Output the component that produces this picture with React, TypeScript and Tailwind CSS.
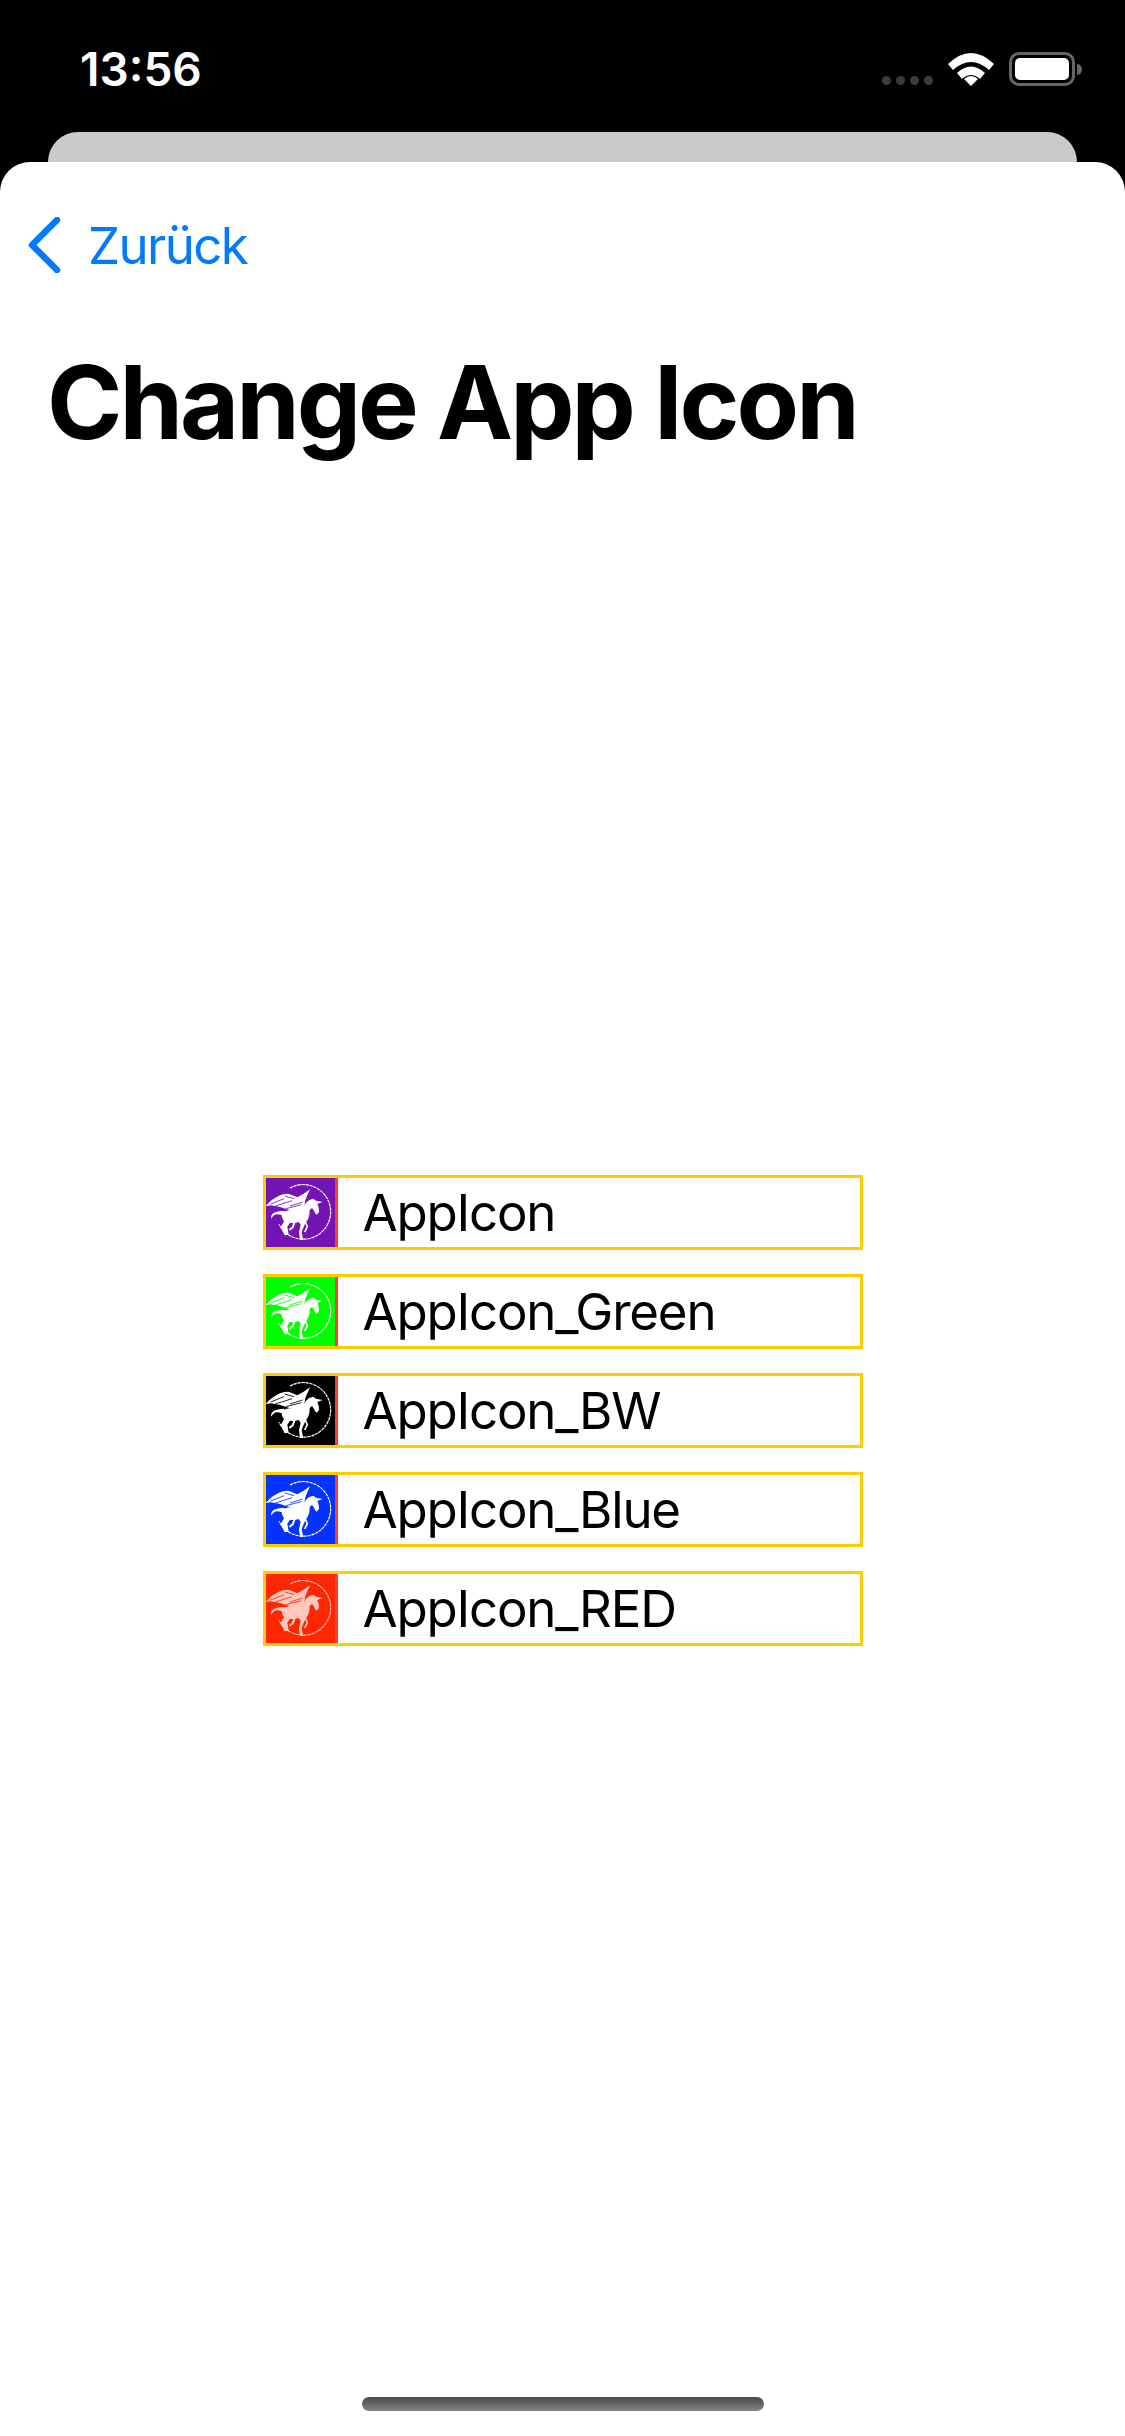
const ROWS = [
  { name: "AppIcon", bg: "bg-[#7514b4]", ink: "text-[#7514b4]" },
  { name: "AppIcon_Green", bg: "bg-[#00ff00]", ink: "text-[#00ff00]" },
  { name: "AppIcon_BW", bg: "bg-black", ink: "text-black" },
  { name: "AppIcon_Blue", bg: "bg-[#0433ff]", ink: "text-[#0433ff]" },
  { name: "AppIcon_RED", bg: "bg-[#ff2600]", ink: "text-[#ff2600]" },
];

// 3 units to a pixel of the 69px icon
function Pegasus({ soft }: { soft?: boolean }) {
  return (
    <svg viewBox="6 6 207 207" className={`w-full h-full ${soft ? "opacity-75" : ""}`}>
      <path d="M78 36 A82 82 0 1 1 45 145" fill="none" stroke="white" strokeWidth="3.5" strokeDasharray="10 2" />
      {/* wing */}
      <path d="M5 90 Q22 70 48 58 Q62 52 76 54 L100 64 Q120 54 138 40 Q130 58 124 72 L120 96 L108 106 L76 102 L46 92 L20 88 Z" fill="white" />
      <path d="M20 84 L60 68 M34 90 L84 74 M66 98 L112 86 M78 90 L116 78 M62 60 L90 68" stroke="currentColor" strokeWidth="2.5" fill="none" />
      {/* tail */}
      <path d="M21 128 Q20 116 30 110 Q44 104 60 104 L54 118 Q40 112 32 116 Q26 120 21 128 Z" fill="white" />
      {/* body, legs, neck, head, horn */}
      <path d="M54 108 Q80 100 108 102 Q120 92 126 80 Q134 70 148 68 L156 74 L176 78 L160 84 Q166 96 165 108 L158 116 Q152 112 150 104 L144 96 L137 102 Q138 122 128 136 L122 146 L116 160 L113 170 L118 192 L108 192 L105 168 L110 146 L104 138 Q90 142 78 140 L70 152 L74 176 L62 178 L56 166 L50 154 L60 136 Q50 122 54 108 Z" fill="white" />
      <path d="M92 138 L86 154 L76 162" stroke="white" strokeWidth="6" fill="none" />
      <path d="M124 138 L130 152 L122 168" stroke="white" strokeWidth="5" fill="none" />
    </svg>
  );
}

function Row({ name, bg, ink }: { name: string; bg: string; ink: string }) {
  return (
    <div className="flex items-center w-[600px] h-[75px] border-[3px] border-[#ffcc00]">
      <div className={`w-[72px] h-[69px] shrink-0 border-r-[3px] border-[#ff3b30] ${bg} ${ink}`}>
        <Pegasus soft={name === "AppIcon_RED"} />
      </div>
      <span className="ml-[25px] text-[51px] leading-none tracking-[-1.2px] text-black">{name}</span>
    </div>
  );
}

export default function App() {
  return (
    <div className="w-[1125px] h-[2436px] bg-black flex flex-col overflow-hidden font-['Inter',sans-serif]">
      <div className="h-[132px] shrink-0 flex items-start justify-between pl-[80px] pr-[43px] pt-[42px]">
        <span className="text-[46px] leading-[54px] font-semibold text-white">13:56</span>
        <div className="flex items-end gap-[15px] pt-[10px]">
          <div className="flex gap-[5px] mb-[1px]">
            <div className="w-[9px] h-[9px] rounded-full bg-[#3c3c3c]" />
            <div className="w-[9px] h-[9px] rounded-full bg-[#3c3c3c]" />
            <div className="w-[9px] h-[9px] rounded-full bg-[#3c3c3c]" />
            <div className="w-[9px] h-[9px] rounded-full bg-[#3c3c3c]" />
          </div>
          <svg width="46" height="33" viewBox="0 0 46 33">
            <path d="M0 11 Q23 -11 46 11 L41 17 Q23 1 5 17 Z" fill="white" />
            <path d="M9 20 Q23 7 37 20 L32 26 Q23 18 14 26 Z" fill="white" />
            <path d="M16 26 Q23 20 30 26 L23 33 Z" fill="white" />
          </svg>
          <div className="flex items-center">
            <div className="w-[66px] h-[34px] rounded-[10px] border-[3px] border-[#666666] p-[3px]">
              <div className="w-full h-full rounded-[5px] bg-white" />
            </div>
            <div className="w-[5px] h-[11px] rounded-r-full bg-[#666666] ml-[2px]" />
          </div>
        </div>
      </div>
      <div className="h-[30px] shrink-0 mx-[48px] bg-[#cacaca] rounded-t-[30px]" />
      <div className="flex-1 bg-white rounded-t-[30px] flex flex-col">
        <div className="flex items-center h-[56px] mt-[55px] pl-[27px]">
          <svg width="34" height="56" viewBox="0 0 34 56">
            <path d="M30 3 L5 28 L30 53" fill="none" stroke="#007aff" strokeWidth="6.5" strokeLinecap="round" strokeLinejoin="round" />
          </svg>
          <span className="ml-[27px] text-[51px] leading-none tracking-[-1.6px] text-[#007aff]">Zurück</span>
        </div>
        <h1 className="mt-[68px] ml-[47px] text-[102px] leading-[122px] font-bold tracking-[-3px] text-black">Change App Icon</h1>
        <div className="flex flex-col items-center gap-[24px] mt-[712px]">
          {ROWS.map((r) => (
            <Row key={r.name} name={r.name} bg={r.bg} ink={r.ink} />
          ))}
        </div>
        <div className="mt-auto mb-[25px] mx-auto w-[402px] h-[14px] rounded-full bg-gradient-to-b from-[#4a4a4a] to-[#858585]" />
      </div>
    </div>
  );
}
